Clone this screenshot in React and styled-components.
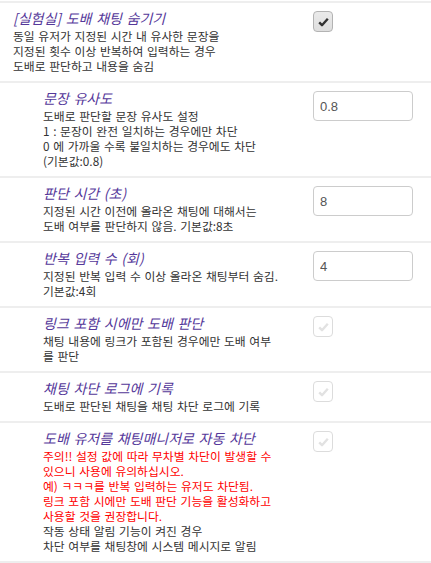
import React, { useState } from "react";
import styled, { createGlobalStyle } from "styled-components";

const GlobalStyle = createGlobalStyle`
  body {
    margin: 0;
    background: #fff;
    font-family: "Noto Sans CJK KR", "Liberation Sans", sans-serif;
    color: #333;
  }
`;

const List = styled.div`
  padding-top: 1px;
`;

const Row = styled.div`
  display: grid;
  grid-template-columns: 1fr 100px;
  column-gap: 20px;
  padding: 6px 18px 8px ${(props) => (props.sub ? "43px" : "13px")};
  border-top: 2px solid #eee;
  &:last-child {
    border-bottom: 2px solid #eee;
  }
`;

const Text = styled.div`
  min-width: 0;
  white-space: nowrap;
`;

const Title = styled.div`
  font-size: 14px;
  line-height: 19px;
  font-style: italic;
  word-spacing: 1.5px;
  color: #55389a;
`;

const Desc = styled.p`
  margin: 0;
  font-size: 11.8px;
  line-height: 15px;
  word-spacing: 1px;
  color: ${(props) => (props.warn ? "#ff0000" : "#333")};
`;

const Control = styled.div`
  padding-top: 2px;
`;

const Box = styled.button`
  width: 20px;
  height: 21px;
  padding: 0;
  display: flex;
  align-items: center;
  justify-content: center;
  border-radius: 4px;
  border: 1px solid ${(props) => (props.checked ? "#b3b3b3" : "#dcdcdc")};
  background: ${(props) =>
    props.checked ? "linear-gradient(#eaeaea, #dedede)" : "#fff"};
  color: ${(props) => (props.checked ? "#333" : "#e2e2e2")};
  cursor: pointer;
`;

const NumInput = styled.input`
  box-sizing: border-box;
  width: 100px;
  height: 30px;
  padding: 0 6px;
  border: 1px solid #ccc;
  border-radius: 4px;
  font-family: "Liberation Sans", Arial, sans-serif;
  font-size: 13px;
  color: #555;
  outline: none;
`;

const Check = () => (
  <svg width="11" height="10" viewBox="0 0 11 10">
    <path
      d="M1.2 5.4 L4 8.2 L9.8 1.8"
      fill="none"
      stroke="currentColor"
      strokeWidth="2.4"
      strokeLinejoin="round"
    />
  </svg>
);

const Checkbox = ({ initial }) => {
  const [checked, setChecked] = useState(initial);
  return (
    <Box checked={checked} onClick={() => setChecked(!checked)}>
      <Check />
    </Box>
  );
};

const Lines = ({ lines, warn }) => (
  <Desc warn={warn}>
    {lines.map((line, j) => (
      <React.Fragment key={j}>
        {j > 0 && <br />}
        {line}
      </React.Fragment>
    ))}
  </Desc>
);

const settings = [
  {
    title: "[실험실] 도배 채팅 숨기기",
    lines: [
      "동일 유저가 지정된 시간 내 유사한 문장을",
      "지정된 횟수 이상 반복하여 입력하는 경우",
      "도배로 판단하고 내용을 숨김",
    ],
    check: true,
  },
  {
    sub: true,
    title: "문장 유사도",
    lines: [
      "도배로 판단할 문장 유사도 설정",
      "1 : 문장이 완전 일치하는 경우에만 차단",
      "0 에 가까울 수록 불일치하는 경우에도 차단",
      "(기본값:0.8)",
    ],
    value: "0.8",
  },
  {
    sub: true,
    title: "판단 시간 (초)",
    lines: ["지정된 시간 이전에 올라온 채팅에 대해서는", "도배 여부를 판단하지 않음. 기본값:8초"],
    value: "8",
  },
  {
    sub: true,
    title: "반복 입력 수 (회)",
    lines: ["지정된 반복 입력 수 이상 올라온 채팅부터 숨김.", "기본값:4회"],
    value: "4",
  },
  {
    sub: true,
    title: "링크 포함 시에만 도배 판단",
    lines: ["채팅 내용에 링크가 포함된 경우에만 도배 여부", "를 판단"],
    check: false,
  },
  {
    sub: true,
    title: "채팅 차단 로그에 기록",
    lines: ["도배로 판단된 채팅을 채팅 차단 로그에 기록"],
    check: false,
  },
  {
    sub: true,
    title: "도배 유저를 채팅매니저로 자동 차단",
    warn: [
      "주의!! 설정 값에 따라 무차별 차단이 발생할 수",
      "있으니 사용에 유의하십시오.",
      "예) ㅋㅋㅋ를 반복 입력하는 유저도 차단됨.",
      "링크 포함 시에만 도배 판단 기능을 활성화하고",
      "사용할 것을 권장합니다.",
    ],
    lines: ["작동 상태 알림 기능이 켜진 경우", "차단 여부를 채팅창에 시스템 메시지로 알림"],
    check: false,
  },
];

export default function App() {
  return (
    <>
      <GlobalStyle />
      <List>
        {settings.map((s, i) => (
          <Row key={i} sub={s.sub}>
            <Text>
              <Title>{s.title}</Title>
              {s.warn && <Lines lines={s.warn} warn />}
              <Lines lines={s.lines} />
            </Text>
            <Control>
              {s.value !== undefined ? (
                <NumInput defaultValue={s.value} />
              ) : (
                <Checkbox initial={s.check} />
              )}
            </Control>
          </Row>
        ))}
      </List>
    </>
  );
}
